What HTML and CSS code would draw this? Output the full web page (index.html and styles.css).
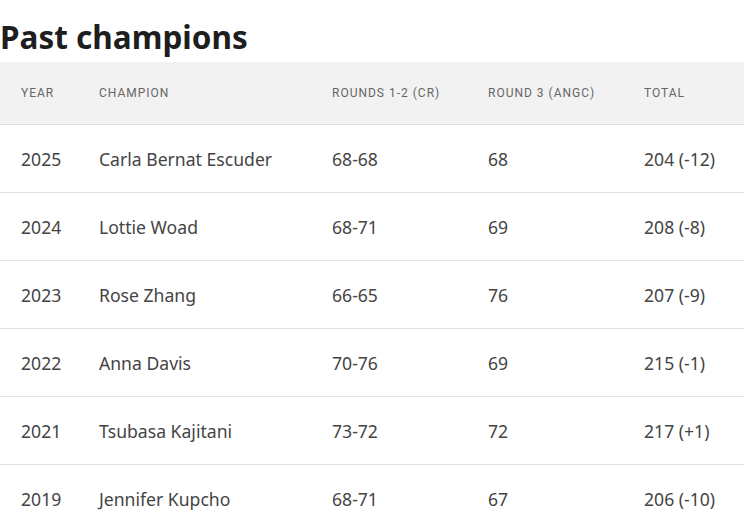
FILE: index.html
```html
<!DOCTYPE html>
<html>
<head>
<meta charset="utf-8">
<link rel="stylesheet" href="styles.css">
</head>
<body>
<h2 class="title">Past champions</h2>
<table class="champs">
  <colgroup>
    <col class="c-year"><col class="c-name"><col class="c-r12"><col class="c-r3"><col class="c-total">
  </colgroup>
  <thead>
    <tr><th>Year</th><th>Champion</th><th>Rounds 1-2 (CR)</th><th>Round 3 (ANGC)</th><th>Total</th></tr>
  </thead>
  <tbody>
    <tr><td>2025</td><td>Carla Bernat Escuder</td><td>68-68</td><td>68</td><td>204 (-12)</td></tr>
    <tr><td>2024</td><td>Lottie Woad</td><td>68-71</td><td>69</td><td>208 (-8)</td></tr>
    <tr><td>2023</td><td>Rose Zhang</td><td>66-65</td><td>76</td><td>207 (-9)</td></tr>
    <tr><td>2022</td><td>Anna Davis</td><td>70-76</td><td>69</td><td>215 (-1)</td></tr>
    <tr><td>2021</td><td>Tsubasa Kajitani</td><td>73-72</td><td>72</td><td>217 (+1)</td></tr>
    <tr><td>2019</td><td>Jennifer Kupcho</td><td>68-71</td><td>67</td><td>206 (-10)</td></tr>
  </tbody>
</table>
</body>
</html>
```
FILE: styles.css
```css
html, body { margin: 0; padding: 0; background: #fff; }
body { font-family: "Noto Sans", Roboto, sans-serif; color: #444; }
.title {
  margin: 0;
  padding-top: 17px;
  height: 45px;
  box-sizing: content-box;
  font-size: 31.5px;
  line-height: 40px;
  font-weight: 700;
  color: #1e1e1e;
  letter-spacing: 0;
}
.champs { width: 744px; border-collapse: collapse; table-layout: fixed; }
.c-year { width: 78px; }
.c-name { width: 233px; }
.c-r12 { width: 156px; }
.c-r3 { width: 156px; }
.c-total { width: 121px; }
.champs th {
  background: #f2f2f2;
  height: 62px;
  padding: 0 0 0 21px;
  text-align: left;
  font-family: Roboto, sans-serif;
  font-weight: 400;
  font-size: 12px;
  letter-spacing: 1px;
  text-transform: uppercase;
  color: #666;
  border-bottom: 1px solid #ddd;
}
.champs td {
  height: 67px;
  padding: 0 0 0 21px;
  font-size: 17.6px;
  color: #444;
  border-bottom: 1px solid #e3e3e3;
  white-space: nowrap;
}
```
